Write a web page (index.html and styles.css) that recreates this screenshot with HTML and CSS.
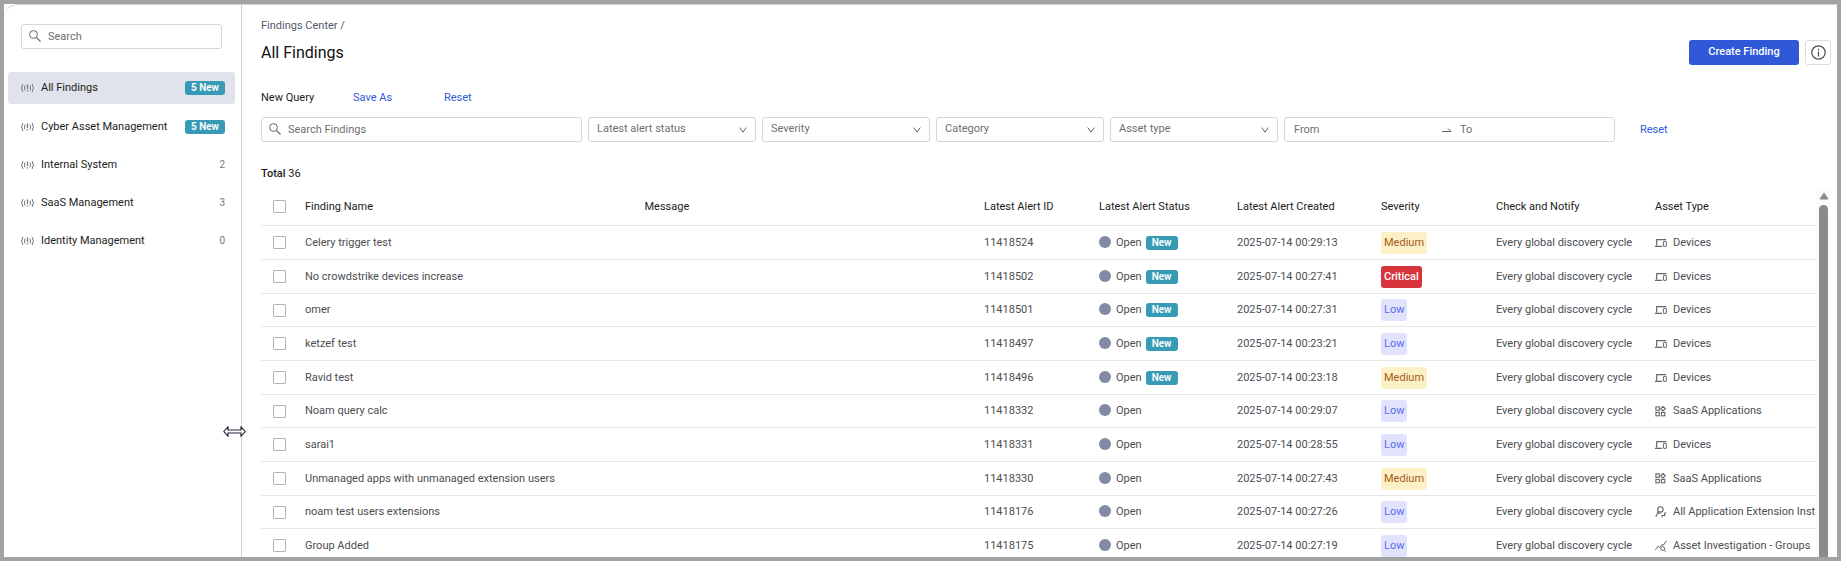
FILE: index.html
```html
<!DOCTYPE html>
<html lang="en">
<head>
<meta charset="utf-8">
<title>All Findings</title>
<link rel="stylesheet" href="styles.css">
</head>
<body>
<svg class="sprite" aria-hidden="true">
  <symbol id="i-search" viewBox="0 0 12 12"><circle cx="4.5" cy="4.5" r="3.9" fill="none" stroke="currentColor"/><path d="M7.4 7.4 11.5 11.5" stroke="currentColor" stroke-width="1.2"/></symbol>
  <symbol id="i-alert" viewBox="0 0 13 10"><g fill="none" stroke="currentColor"><path d="M1.9 1Q-.7 5 1.9 9M11.1 1q2.6 4 0 8"/><path d="M3.9 2.6Q3.1 5 3.9 7.4M9.1 2.6q.8 2.4 0 4.8"/><path d="M6.5 1.6v4.4M6.5 7.2v1.4" stroke-width="1.3"/></g></symbol>
  <symbol id="i-down" viewBox="0 0 8 6"><path d="M.7.6 4 5.2 7.3.6" fill="none" stroke="currentColor"/></symbol>
  <symbol id="i-devices" viewBox="0 0 12 8"><path d="M11.2.6H1.7V6.5M0 7.3H7" fill="none" stroke="currentColor" stroke-width="1.2"/><rect x="8.4" y="2.4" width="2.9" height="5" rx=".4" fill="none" stroke="currentColor"/></symbol>
  <symbol id="i-apps" viewBox="0 0 11 11"><g fill="none" stroke="currentColor" stroke-width="1.1"><rect x=".9" y=".9" width="3.4" height="3.4"/><rect x=".9" y="6.4" width="3.4" height="3.4"/><rect x="6.4" y="6.4" width="3.4" height="3.4"/><path d="M8 .4 10.3 2.7 8 5 5.7 2.7Z"/></g></symbol>
  <symbol id="i-user" viewBox="0 0 12 12"><g fill="none" stroke="currentColor" stroke-width="1.1"><circle cx="5.4" cy="3.4" r="2.7"/><path d="M5.6 7Q1.2 7 1 11M3.3 5.5 2.2 7.6"/><path d="M6.5 9.5h4M9 8.2 11 6.5M7.2 9.5v2M9.6 7v3"/></g></symbol>
  <symbol id="i-graph" viewBox="0 0 12 12"><g fill="none" stroke="currentColor"><path d="M.4 9.8 3 6.2l1.6 1.5L7 4.4l1.2 1L11.5.8"/><circle cx="7.8" cy="8.6" r="1.9"/><path d="M9.2 10 11 11.7"/></g></symbol>
</svg>
<div class="app">
  <aside class="sidebar">
    <label class="field side-search"><svg class="i-search"><use href="#i-search"/></svg><input type="text" placeholder="Search" aria-label="Search"></label>
    <nav class="nav">
      <a class="nav-item active" href="#"><svg class="i-alert"><use href="#i-alert"/></svg><span>All Findings</span><b class="badge">5 New</b></a>
      <a class="nav-item" href="#"><svg class="i-alert"><use href="#i-alert"/></svg><span>Cyber Asset Management</span><b class="badge">5 New</b></a>
      <a class="nav-item" href="#"><svg class="i-alert"><use href="#i-alert"/></svg><span>Internal System</span><i class="count">2</i></a>
      <a class="nav-item" href="#"><svg class="i-alert"><use href="#i-alert"/></svg><span>SaaS Management</span><i class="count">3</i></a>
      <a class="nav-item" href="#"><svg class="i-alert"><use href="#i-alert"/></svg><span>Identity Management</span><i class="count">0</i></a>
    </nav>
    <svg class="resize" viewBox="0 0 23 11"><path d="M.8 5.5 5 .8V4H18V.8L22.2 5.5 18 10.2V7H5V10.2Z" fill="#fff" stroke="#223" stroke-width="1.1"/></svg>
  </aside>
  <main class="main">
    <div class="crumbs"><a href="#">Findings Center</a> /</div>
    <header class="title-bar">
      <h1>All Findings</h1>
      <div class="actions">
        <button class="primary" type="button">Create Finding</button>
        <button class="info" type="button" aria-label="Information"><svg viewBox="0 0 15 15"><circle cx="7.5" cy="7.5" r="6.7" fill="none" stroke="currentColor" stroke-width="1.2"/><path d="M7.5 6.4v5M7.5 3.8v1.4" stroke="currentColor" stroke-width="1.2"/></svg></button>
      </div>
    </header>
    <div class="query"><span class="query-name">New Query</span><button class="link save" type="button">Save As</button><button class="link" type="button">Reset</button></div>
    <form class="filters">
      <label class="field find"><svg class="i-search"><use href="#i-search"/></svg><input type="text" placeholder="Search Findings" aria-label="Search Findings"></label>
      <div class="field drop"><select aria-label="Latest alert status"><option>Latest alert status</option></select><svg class="i-down"><use href="#i-down"/></svg></div>
      <div class="field drop"><select aria-label="Severity"><option>Severity</option></select><svg class="i-down"><use href="#i-down"/></svg></div>
      <div class="field drop"><select aria-label="Category"><option>Category</option></select><svg class="i-down"><use href="#i-down"/></svg></div>
      <div class="field drop"><select aria-label="Asset type"><option>Asset type</option></select><svg class="i-down"><use href="#i-down"/></svg></div>
      <div class="field range"><input type="text" placeholder="From" aria-label="From"><svg class="i-arrow" viewBox="0 0 10 6"><path d="M0 4.5H9L6 1.5" fill="none" stroke="currentColor"/></svg><input type="text" placeholder="To" aria-label="To"></div>
      <button class="link clear" type="reset">Reset</button>
    </form>
    <p class="total">Total <span>36</span></p>
    <div class="list">
      <div class="table-wrap">
        <table class="table">
          <colgroup><col class="c-check"><col><col><col class="c-id"><col class="c-status"><col class="c-created"><col class="c-severity"><col class="c-notify"><col class="c-asset"></colgroup>
          <thead><tr><th><input type="checkbox" aria-label="Select all"></th><th>Finding Name</th><th>Message</th><th>Latest Alert ID</th><th>Latest Alert Status</th><th>Latest Alert Created</th><th>Severity</th><th>Check and Notify</th><th>Asset Type</th></tr></thead>
          <tbody>
            <tr><td><input type="checkbox" aria-label="Select Celery trigger test"></td><td>Celery trigger test</td><td></td><td>11418524</td><td><div class="status"><i class="dot"></i>Open<b class="badge">New</b></div></td><td>2025-07-14 00:29:13</td><td><span class="sev medium">Medium</span></td><td>Every global discovery cycle</td><td><div class="asset"><svg class="i-devices"><use href="#i-devices"/></svg>Devices</div></td></tr>
            <tr><td><input type="checkbox" aria-label="Select No crowdstrike devices increase"></td><td>No crowdstrike devices increase</td><td></td><td>11418502</td><td><div class="status"><i class="dot"></i>Open<b class="badge">New</b></div></td><td>2025-07-14 00:27:41</td><td><span class="sev critical">Critical</span></td><td>Every global discovery cycle</td><td><div class="asset"><svg class="i-devices"><use href="#i-devices"/></svg>Devices</div></td></tr>
            <tr><td><input type="checkbox" aria-label="Select omer"></td><td>omer</td><td></td><td>11418501</td><td><div class="status"><i class="dot"></i>Open<b class="badge">New</b></div></td><td>2025-07-14 00:27:31</td><td><span class="sev low">Low</span></td><td>Every global discovery cycle</td><td><div class="asset"><svg class="i-devices"><use href="#i-devices"/></svg>Devices</div></td></tr>
            <tr><td><input type="checkbox" aria-label="Select ketzef test"></td><td>ketzef test</td><td></td><td>11418497</td><td><div class="status"><i class="dot"></i>Open<b class="badge">New</b></div></td><td>2025-07-14 00:23:21</td><td><span class="sev low">Low</span></td><td>Every global discovery cycle</td><td><div class="asset"><svg class="i-devices"><use href="#i-devices"/></svg>Devices</div></td></tr>
            <tr><td><input type="checkbox" aria-label="Select Ravid test"></td><td>Ravid test</td><td></td><td>11418496</td><td><div class="status"><i class="dot"></i>Open<b class="badge">New</b></div></td><td>2025-07-14 00:23:18</td><td><span class="sev medium">Medium</span></td><td>Every global discovery cycle</td><td><div class="asset"><svg class="i-devices"><use href="#i-devices"/></svg>Devices</div></td></tr>
            <tr><td><input type="checkbox" aria-label="Select Noam query calc"></td><td>Noam query calc</td><td></td><td>11418332</td><td><div class="status"><i class="dot"></i>Open</div></td><td>2025-07-14 00:29:07</td><td><span class="sev low">Low</span></td><td>Every global discovery cycle</td><td><div class="asset"><svg class="i-apps"><use href="#i-apps"/></svg>SaaS Applications</div></td></tr>
            <tr><td><input type="checkbox" aria-label="Select sarai1"></td><td>sarai1</td><td></td><td>11418331</td><td><div class="status"><i class="dot"></i>Open</div></td><td>2025-07-14 00:28:55</td><td><span class="sev low">Low</span></td><td>Every global discovery cycle</td><td><div class="asset"><svg class="i-devices"><use href="#i-devices"/></svg>Devices</div></td></tr>
            <tr><td><input type="checkbox" aria-label="Select Unmanaged apps with unmanaged extension users"></td><td>Unmanaged apps with unmanaged extension users</td><td></td><td>11418330</td><td><div class="status"><i class="dot"></i>Open</div></td><td>2025-07-14 00:27:43</td><td><span class="sev medium">Medium</span></td><td>Every global discovery cycle</td><td><div class="asset"><svg class="i-apps"><use href="#i-apps"/></svg>SaaS Applications</div></td></tr>
            <tr><td><input type="checkbox" aria-label="Select noam test users extensions"></td><td>noam test users extensions</td><td></td><td>11418176</td><td><div class="status"><i class="dot"></i>Open</div></td><td>2025-07-14 00:27:26</td><td><span class="sev low">Low</span></td><td>Every global discovery cycle</td><td><div class="asset"><svg class="i-user"><use href="#i-user"/></svg>All Application Extension Instances</div></td></tr>
            <tr><td><input type="checkbox" aria-label="Select Group Added"></td><td>Group Added</td><td></td><td>11418175</td><td><div class="status"><i class="dot"></i>Open</div></td><td>2025-07-14 00:27:19</td><td><span class="sev low">Low</span></td><td>Every global discovery cycle</td><td><div class="asset"><svg class="i-graph"><use href="#i-graph"/></svg>Asset Investigation - Groups</div></td></tr>
          </tbody>
        </table>
      </div>
      <div class="scrollbar"><svg viewBox="0 0 10 8"><path d="M5 1 9 7H1Z" fill="#8b8b8b" stroke="#8b8b8b" stroke-linejoin="round"/></svg><div class="thumb"></div></div>
    </div>
  </main>
</div>
</body>
</html>
```
FILE: styles.css
```css
* { box-sizing: border-box; }
body {
  margin: 0;
  height: 100vh;
  border: 4px solid #a3a3a3;
  overflow: hidden;
  background: #fff;
  color: #4c4e52;
  font: 11px/16px Roboto, "Liberation Sans", sans-serif;
}
a { color: inherit; text-decoration: none; }
button, input, select { font: inherit; color: inherit; }
svg { display: block; flex: none; }
.sprite { position: absolute; width: 0; height: 0; }

.app {
  display: flex;
  height: 100%;
  border-top: 1px solid #cfd2e0;
  border-top-left-radius: 14px;
}

.sidebar {
  position: relative;
  flex: none;
  width: 238px;
  padding: 19px 6px 0 4px;
  border-right: 1px solid #cfd0dc;
}
.field {
  display: flex;
  align-items: center;
  height: 25px;
  border: 1px solid #d6d6d6;
  border-radius: 3px;
  background: #fff;
  color: #666;
}
.field input {
  flex: 1;
  min-width: 0;
  padding: 0;
  border: 0;
  outline: 0;
  background: none;
}
.field input::placeholder { color: #6f6f6f; opacity: 1; }
.i-search { width: 12px; height: 12px; margin: 0 7px 2px 7px; color: #666; }
.side-search { margin: 0 13px; }

.nav { display: flex; flex-direction: column; gap: 6px; margin-top: 23px; }
.nav-item {
  display: flex;
  align-items: center;
  height: 32px;
  padding: 0 10px 0 13px;
  border-radius: 3px;
  color: #1c1d21;
}
.nav-item span { flex: 1; margin-left: 7px; }
.active { margin-bottom: 1px; background: #e0e3ec; }
.i-alert { width: 13px; height: 10px; color: #777; }
.badge {
  display: block;
  padding: 0 6px;
  border-radius: 3px;
  background: #389bb5;
  color: #fff;
  font-size: 10px;
  font-weight: 600;
  line-height: 14px;
}
.count { color: #777; font-size: 10px; font-style: normal; }
.resize { position: absolute; top: 421px; right: -5px; width: 23px; height: 11px; }

.main {
  display: flex;
  flex-direction: column;
  flex: 1;
  min-width: 0;
  padding: 13px 6px 0 19px;
}
.crumbs { color: #535a6c; }
.title-bar { display: flex; align-items: center; justify-content: space-between; height: 36px; }
h1 { margin: 0; padding-top: 2px; color: #111; font-size: 16px; font-weight: 400; line-height: 24px; }
.actions { display: flex; gap: 6px; }
.primary {
  width: 110px;
  height: 25px;
  padding: 0;
  border: 0;
  border-radius: 3px;
  background: #3059d8;
  color: #fff;
  font-weight: 500;
}
.info {
  display: flex;
  align-items: center;
  justify-content: center;
  width: 26px;
  height: 25px;
  padding: 0;
  border: 1px solid #dcdcdc;
  border-radius: 3px;
  background: #fff;
}
.info svg { width: 15px; height: 15px; }
.link { padding: 0; border: 0; background: none; color: #3059d8; line-height: 16px; }
.query { display: flex; margin-top: 20px; color: #1c1d21; }
.query-name { width: 92px; }
.save { width: 91px; text-align: left; }

.filters { display: flex; gap: 6px; margin-top: 11px; }
.find { width: 321px; }
.drop { position: relative; width: 168px; }
.drop select {
  appearance: none;
  width: 100%;
  height: 23px;
  padding: 0 24px 2px 8px;
  border: 0;
  border-radius: 3px;
  background: none;
  color: #6f6f6f;
}
.i-down { position: absolute; right: 8px; top: 9px; width: 8px; height: 6px; pointer-events: none; }
.range { width: 331px; padding: 0 6px 0 9px; }
.range input:last-child { margin-left: 8px; }
.i-arrow { width: 10px; height: 6px; }
.clear { margin-left: 19px; }

.total { margin: 24px 0 0; color: #1c1d21; font-weight: 500; }
.total span { font-weight: 400; }

.list { display: flex; flex: 1; min-height: 0; margin-top: 5px; }
.table-wrap { flex: 1; min-width: 0; overflow: hidden; }
.table { width: 100%; table-layout: fixed; border-collapse: separate; border-spacing: 0; white-space: nowrap; }
.c-check { width: 44px; }
.c-id, .c-severity { width: 115px; }
.c-status { width: 138px; }
.c-created { width: 144px; }
.c-notify { width: 159px; }
.c-asset { width: 161px; }
th, td { height: 34px; padding: 0; border-bottom: 1px solid #e6e6e6; text-align: left; vertical-align: middle; overflow: hidden; }
th { height: 39px; padding-top: 1px; color: #1c1d21; font-weight: 400; }
tbody tr:nth-child(3n) td { height: 33px; }
.table input {
  appearance: none;
  display: block;
  width: 13px;
  height: 13px;
  margin: 0 0 0 12px;
  border: 1px solid #b3b3b3;
  border-radius: 1px;
  background: #fff;
}
.status, .asset { display: flex; align-items: center; }
.dot { width: 12px; height: 12px; margin: 0 5px 2px 0; border-radius: 50%; background: #828ba6; }
.status .badge { margin-left: 4px; }
.sev { display: inline-block; padding: 3px; border-radius: 3px; vertical-align: middle; }
.medium { background: #fcf1c6; color: #a65a1c; }
.critical { background: #d6353b; color: #fff; font-weight: 500; }
.low { background: #e1e3fd; color: #5b6cf0; }
.asset svg { width: 12px; height: 12px; margin-right: 6px; color: #666; }
.asset .i-devices { height: 8px; }
.asset .i-apps { width: 11px; height: 11px; margin-right: 7px; }

.scrollbar { display: flex; flex-direction: column; align-items: center; flex: none; width: 15px; padding-top: 5px; background: #fbfbfb; }
.scrollbar svg { width: 10px; height: 8px; }
.thumb { flex: 1; width: 9px; margin-top: 5px; border-radius: 5px 5px 0 0; background: #8b8b8b; }
```
